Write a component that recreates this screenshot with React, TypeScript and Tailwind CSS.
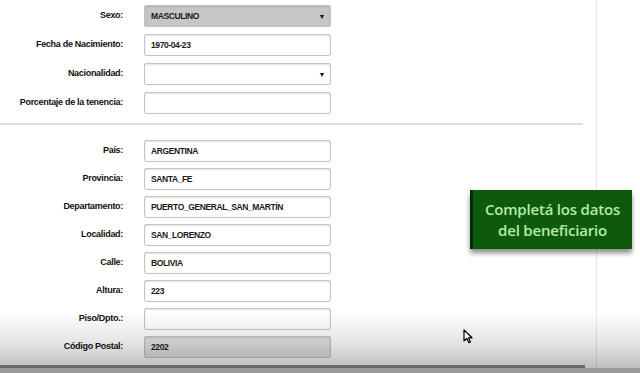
import React from "react";

const labelCls =
  "w-[124px] shrink-0 text-right text-[9px] font-bold tracking-[-0.3px] text-[#111] pr-[1px]";
const inputBase =
  "w-[187px] h-[22px] shrink-0 rounded-[2px] border border-[#c4c4c4] shadow-[inset_0_1px_2px_rgba(0,0,0,0.12)] flex items-center pl-[6px] pr-[5px] text-[8.5px] font-bold tracking-[-0.4px] text-[#1a1a1a]";

function Row({
  label,
  value,
  select,
  gray,
}: {
  label: string;
  value?: string;
  select?: boolean;
  gray?: string;
}) {
  return (
    <div className="flex items-center gap-[20px]">
      <div className={labelCls}>{label}</div>
      <div className={`${inputBase} ${gray ?? "bg-white"}`}>
        <span className="flex-1">{value ?? ""}</span>
        {select && <span className="text-[7px] text-[#111] leading-none">▼</span>}
      </div>
    </div>
  );
}

export default function App() {
  return (
    <div
      className="relative w-[640px] h-[373px] overflow-hidden bg-white"
      style={{ fontFamily: '"Liberation Sans", Arial, sans-serif' }}
    >
      <div className="flex h-full">
        <div className="w-[597px] h-full border-r border-[#e6e6e6] shrink-0">
          <div className="w-[583px]">
            <div className="flex flex-col gap-[7px] pt-[5px]">
              <Row label="Sexo:" value="MASCULINO" select gray="bg-[#c6c6c6] border-[#a8a8a8]" />
              <Row label="Fecha de Nacimiento:" value="1970-04-23" />
              <Row label="Nacionalidad:" select />
              <Row label="Porcentaje de la tenencia:" />
            </div>
            <div className="mt-[9px] h-[2px] bg-[#dcdcdc]" />
            <div className="flex flex-col gap-[6px] pt-[15px]">
              <Row label="País:" value="ARGENTINA" />
              <Row label="Provincia:" value="SANTA_FE" />
              <Row label="Departamento:" value="PUERTO_GENERAL_SAN_MARTÍN" />
              <Row label="Localidad:" value="SAN_LORENZO" />
              <Row label="Calle:" value="BOLIVIA" />
              <Row label="Altura:" value="223" />
              <Row label="Piso/Dpto.:" />
              <Row label="Código Postal:" value="2202" gray="bg-[#e2e2e2] border-[#a8a8a8]" />
            </div>
          </div>
        </div>
      </div>

      {/* bottom shading */}
      <div className="pointer-events-none absolute left-0 right-0 bottom-0 h-[62px] bg-gradient-to-b from-[rgba(0,0,0,0)] via-[rgba(0,0,0,0.1)] to-[rgba(0,0,0,0.28)]" />
      <div className="absolute left-0 bottom-[5px] w-[585px] h-[3px] bg-[#6a6a6a]" />
      <div className="absolute left-0 right-0 bottom-0 h-[5px] bg-[#999]" />

      {/* green callout */}
      <div className="absolute left-[470px] top-[190px] w-[162px] h-[59px] bg-[#0d5a0d] border-l-[3px] border-[#052805] shadow-[0_4px_5px_rgba(0,0,0,0.45)] flex items-center justify-center">
        <div
          className="text-center text-[15px] font-semibold leading-[21px] text-[#b3eba8] tracking-[-0.2px]"
          style={{ fontFamily: '"Open Sans", sans-serif' }}
        >
          Completá los datos
          <br />
          del beneficiario
        </div>
      </div>

      {/* mouse cursor */}
      <svg
        className="absolute left-[463px] top-[329px]"
        width="10"
        height="15"
        viewBox="0 0 10 15"
      >
        <path
          d="M1 1 L1 12 L3.8 9.4 L5.8 13.6 L7.4 12.9 L5.5 8.8 L9 8.8 Z"
          fill="white"
          stroke="black"
          strokeWidth="1.2"
          strokeLinejoin="round"
        />
      </svg>
    </div>
  );
}
